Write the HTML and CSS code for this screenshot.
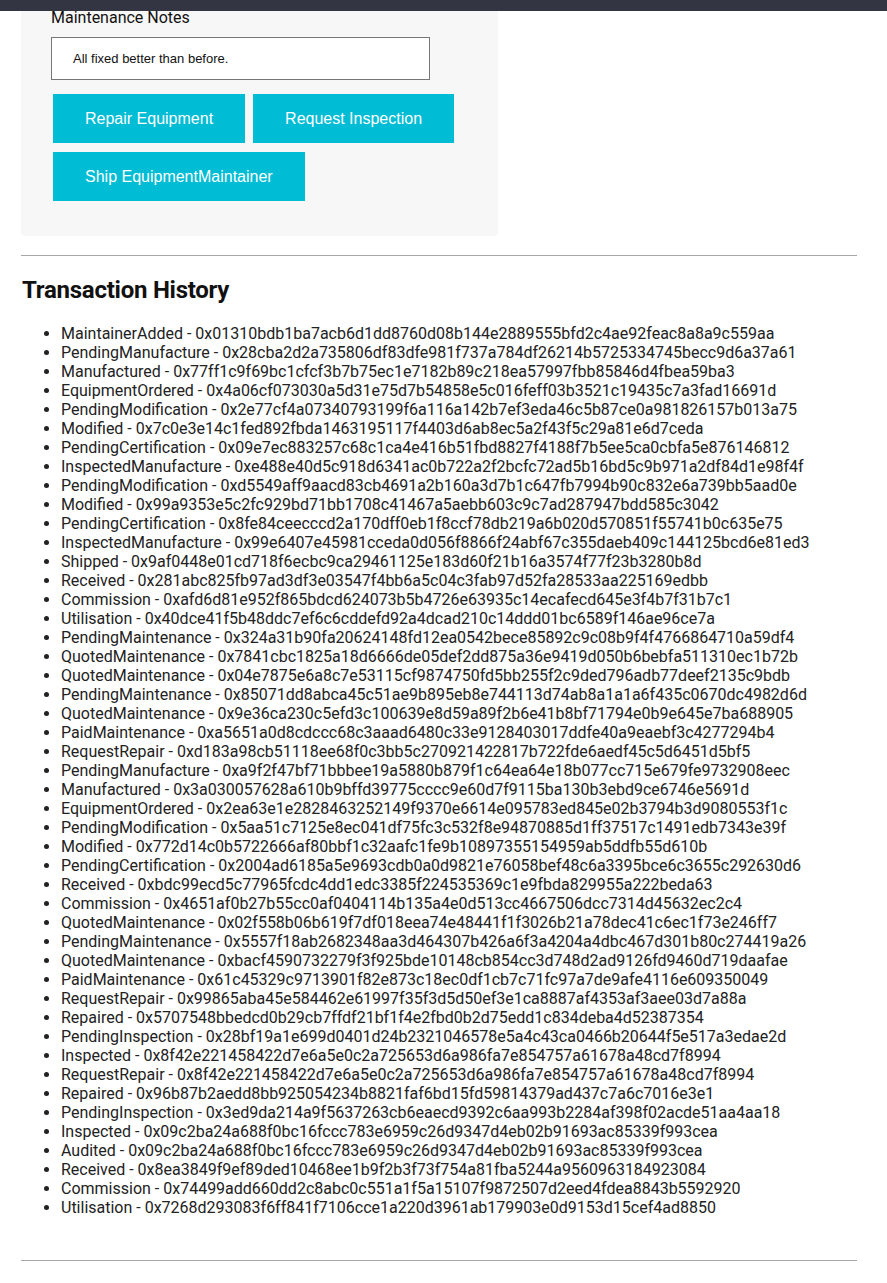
FILE: index.html
```html
<!DOCTYPE html>
<html lang="en">
<head>
<meta charset="utf-8">
<title>Transaction History</title>
<link rel="stylesheet" href="styles.css">
</head>
<body>
<div class="topbar"></div>
<main class="page">
  <section class="card">
    <label class="field-label" for="notes">Maintenance Notes</label>
    <input class="field-input" id="notes" type="text" value="All fixed better than before.">
    <div class="actions">
      <button class="btn" type="button">Repair Equipment</button>
      <button class="btn" type="button">Request Inspection</button>
      <button class="btn" type="button">Ship EquipmentMaintainer</button>
    </div>
  </section>
  <hr class="rule">
  <h2 class="history-title">Transaction History</h2>
  <ul class="history">
    <li>MaintainerAdded - 0x01310bdb1ba7acb6d1dd8760d08b144e2889555bfd2c4ae92feac8a8a9c559aa</li>
    <li>PendingManufacture - 0x28cba2d2a735806df83dfe981f737a784df26214b5725334745becc9d6a37a61</li>
    <li>Manufactured - 0x77ff1c9f69bc1cfcf3b7b75ec1e7182b89c218ea57997fbb85846d4fbea59ba3</li>
    <li>EquipmentOrdered - 0x4a06cf073030a5d31e75d7b54858e5c016feff03b3521c19435c7a3fad16691d</li>
    <li>PendingModification - 0x2e77cf4a07340793199f6a116a142b7ef3eda46c5b87ce0a981826157b013a75</li>
    <li>Modified - 0x7c0e3e14c1fed892fbda1463195117f4403d6ab8ec5a2f43f5c29a81e6d7ceda</li>
    <li>PendingCertification - 0x09e7ec883257c68c1ca4e416b51fbd8827f4188f7b5ee5ca0cbfa5e876146812</li>
    <li>InspectedManufacture - 0xe488e40d5c918d6341ac0b722a2f2bcfc72ad5b16bd5c9b971a2df84d1e98f4f</li>
    <li>PendingModification - 0xd5549aff9aacd83cb4691a2b160a3d7b1c647fb7994b90c832e6a739bb5aad0e</li>
    <li>Modified - 0x99a9353e5c2fc929bd71bb1708c41467a5aebb603c9c7ad287947bdd585c3042</li>
    <li>PendingCertification - 0x8fe84ceecccd2a170dff0eb1f8ccf78db219a6b020d570851f55741b0c635e75</li>
    <li>InspectedManufacture - 0x99e6407e45981cceda0d056f8866f24abf67c355daeb409c144125bcd6e81ed3</li>
    <li>Shipped - 0x9af0448e01cd718f6ecbc9ca29461125e183d60f21b16a3574f77f23b3280b8d</li>
    <li>Received - 0x281abc825fb97ad3df3e03547f4bb6a5c04c3fab97d52fa28533aa225169edbb</li>
    <li>Commission - 0xafd6d81e952f865bdcd624073b5b4726e63935c14ecafecd645e3f4b7f31b7c1</li>
    <li>Utilisation - 0x40dce41f5b48ddc7ef6c6cddefd92a4dcad210c14ddd01bc6589f146ae96ce7a</li>
    <li>PendingMaintenance - 0x324a31b90fa20624148fd12ea0542bece85892c9c08b9f4f4766864710a59df4</li>
    <li>QuotedMaintenance - 0x7841cbc1825a18d6666de05def2dd875a36e9419d050b6bebfa511310ec1b72b</li>
    <li>QuotedMaintenance - 0x04e7875e6a8c7e53115cf9874750fd5bb255f2c9ded796adb77deef2135c9bdb</li>
    <li>PendingMaintenance - 0x85071dd8abca45c51ae9b895eb8e744113d74ab8a1a1a6f435c0670dc4982d6d</li>
    <li>QuotedMaintenance - 0x9e36ca230c5efd3c100639e8d59a89f2b6e41b8bf71794e0b9e645e7ba688905</li>
    <li>PaidMaintenance - 0xa5651a0d8cdccc68c3aaad6480c33e9128403017ddfe40a9eaebf3c4277294b4</li>
    <li>RequestRepair - 0xd183a98cb51118ee68f0c3bb5c270921422817b722fde6aedf45c5d6451d5bf5</li>
    <li>PendingManufacture - 0xa9f2f47bf71bbbee19a5880b879f1c64ea64e18b077cc715e679fe9732908eec</li>
    <li>Manufactured - 0x3a030057628a610b9bffd39775cccc9e60d7f9115ba130b3ebd9ce6746e5691d</li>
    <li>EquipmentOrdered - 0x2ea63e1e2828463252149f9370e6614e095783ed845e02b3794b3d9080553f1c</li>
    <li>PendingModification - 0x5aa51c7125e8ec041df75fc3c532f8e94870885d1ff37517c1491edb7343e39f</li>
    <li>Modified - 0x772d14c0b5722666af80bbf1c32aafc1fe9b10897355154959ab5ddfb55d610b</li>
    <li>PendingCertification - 0x2004ad6185a5e9693cdb0a0d9821e76058bef48c6a3395bce6c3655c292630d6</li>
    <li>Received - 0xbdc99ecd5c77965fcdc4dd1edc3385f224535369c1e9fbda829955a222beda63</li>
    <li>Commission - 0x4651af0b27b55cc0af0404114b135a4e0d513cc4667506dcc7314d45632ec2c4</li>
    <li>QuotedMaintenance - 0x02f558b06b619f7df018eea74e48441f1f3026b21a78dec41c6ec1f73e246ff7</li>
    <li>PendingMaintenance - 0x5557f18ab2682348aa3d464307b426a6f3a4204a4dbc467d301b80c274419a26</li>
    <li>QuotedMaintenance - 0xbacf4590732279f3f925bde10148cb854cc3d748d2ad9126fd9460d719daafae</li>
    <li>PaidMaintenance - 0x61c45329c9713901f82e873c18ec0df1cb7c71fc97a7de9afe4116e609350049</li>
    <li>RequestRepair - 0x99865aba45e584462e61997f35f3d5d50ef3e1ca8887af4353af3aee03d7a88a</li>
    <li>Repaired - 0x5707548bbedcd0b29cb7ffdf21bf1f4e2fbd0b2d75edd1c834deba4d52387354</li>
    <li>PendingInspection - 0x28bf19a1e699d0401d24b2321046578e5a4c43ca0466b20644f5e517a3edae2d</li>
    <li>Inspected - 0x8f42e221458422d7e6a5e0c2a725653d6a986fa7e854757a61678a48cd7f8994</li>
    <li>RequestRepair - 0x8f42e221458422d7e6a5e0c2a725653d6a986fa7e854757a61678a48cd7f8994</li>
    <li>Repaired - 0x96b87b2aedd8bb925054234b8821faf6bd15fd59814379ad437c7a6c7016e3e1</li>
    <li>PendingInspection - 0x3ed9da214a9f5637263cb6eaecd9392c6aa993b2284af398f02acde51aa4aa18</li>
    <li>Inspected - 0x09c2ba24a688f0bc16fccc783e6959c26d9347d4eb02b91693ac85339f993cea</li>
    <li>Audited - 0x09c2ba24a688f0bc16fccc783e6959c26d9347d4eb02b91693ac85339f993cea</li>
    <li>Received - 0x8ea3849f9ef89ded10468ee1b9f2b3f73f754a81fba5244a9560963184923084</li>
    <li>Commission - 0x74499add660dd2c8abc0c551a1f5a15107f9872507d2eed4fdea8843b5592920</li>
    <li>Utilisation - 0x7268d293083f6ff841f7106cce1a220d3961ab179903e0d9153d15cef4ad8850</li>
  </ul>
  <hr class="rule rule-bottom">
</main>
</body>
</html>
```

FILE: styles.css
```css
html, body {
  margin: 0;
  padding: 0;
  background: #ffffff;
}

body {
  font-family: Roboto, "Liberation Sans", Arial, sans-serif;
  color: #1a1a1a;
}

.topbar {
  position: fixed;
  top: 0;
  left: 0;
  right: 0;
  height: 11px;
  background: #333543;
  z-index: 10;
}

.page {
  padding: 0 30px 0 21px;
}

.card {
  width: 477px;
  box-sizing: border-box;
  background: #f7f7f7;
  border-radius: 0 0 4px 4px;
  padding: 8px 30px 35px 30px;
  display: flex;
  flex-direction: column;
  align-items: flex-start;
}

.field-label {
  font-size: 16px;
  line-height: 19px;
  color: #111;
}

.field-input {
  margin-top: 10px;
  width: 379px;
  height: 43px;
  box-sizing: border-box;
  border: 1px solid #767676;
  border-radius: 0;
  background: #fff;
  padding: 0 0 0 21px;
  font-family: "Liberation Sans", Arial, sans-serif;
  font-size: 13px;
  color: #111;
  outline: none;
}

.actions {
  margin-top: 14px;
  padding-left: 2px;
  display: flex;
  flex-wrap: wrap;
  gap: 9px 8px;
  width: 420px;
}

.btn {
  height: 49px;
  padding: 0 32px;
  border: none;
  border-radius: 0;
  background: #00bcd4;
  color: #ffffff;
  font-family: "Liberation Sans", Arial, sans-serif;
  font-size: 16px;
  cursor: pointer;
}

.rule {
  margin: 19px 0 0 0;
  border: none;
  border-top: 1px solid #a8a8a8;
  height: 0;
}

.history-title {
  margin: 20px 0 0 1px;
  font-size: 24px;
  line-height: 28px;
  font-weight: 700;
  letter-spacing: -0.25px;
  color: #111;
}

.history {
  margin: 20px 0 0 0;
  padding-left: 40px;
  font-size: 16px;
  line-height: 19px;
  color: #222;
}

.rule-bottom {
  margin-top: 43px;
  margin-bottom: 20px;
}
```
